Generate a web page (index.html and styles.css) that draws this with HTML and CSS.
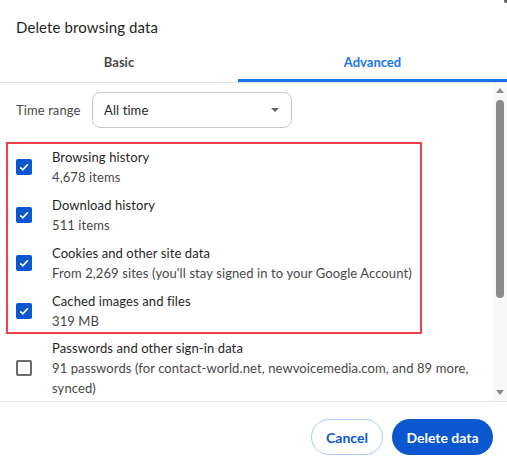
FILE: index.html
```html
<!DOCTYPE html>
<html>
<head>
<meta charset="utf-8">
<link rel="stylesheet" href="styles.css">
</head>
<body>
<div class="dialog">
  <div class="corner"></div>
  <div class="header">Delete browsing data</div>
  <div class="tabs">
    <div class="tab basic">Basic</div>
    <div class="tab active">Advanced</div>
  </div>
  <div class="scroll">
    <div class="content">
      <div class="range">
        <span class="range-label">Time range</span>
        <div class="select">
          <span>All time</span>
          <span class="caret"></span>
        </div>
      </div>
      <div class="highlight">
        <div class="row">
          <span class="cb checked"><svg viewBox="0 0 16 16" width="16" height="16"><path d="M4.2 8.3l2.6 2.5 5-5.4" fill="none" stroke="#fff" stroke-width="1.6"/></svg></span>
          <div class="txt"><div class="t">Browsing history</div><div class="s">4,678 items</div></div>
        </div>
        <div class="row">
          <span class="cb checked"><svg viewBox="0 0 16 16" width="16" height="16"><path d="M4.2 8.3l2.6 2.5 5-5.4" fill="none" stroke="#fff" stroke-width="1.6"/></svg></span>
          <div class="txt"><div class="t">Download history</div><div class="s">511 items</div></div>
        </div>
        <div class="row">
          <span class="cb checked"><svg viewBox="0 0 16 16" width="16" height="16"><path d="M4.2 8.3l2.6 2.5 5-5.4" fill="none" stroke="#fff" stroke-width="1.6"/></svg></span>
          <div class="txt"><div class="t">Cookies and other site data</div><div class="s">From 2,269 sites (you'll stay signed in to your Google Account)</div></div>
        </div>
        <div class="row">
          <span class="cb checked"><svg viewBox="0 0 16 16" width="16" height="16"><path d="M4.2 8.3l2.6 2.5 5-5.4" fill="none" stroke="#fff" stroke-width="1.6"/></svg></span>
          <div class="txt"><div class="t">Cached images and files</div><div class="s">319 MB</div></div>
        </div>
      </div>
      <div class="row plain">
        <span class="cb"></span>
        <div class="txt"><div class="t">Passwords and other sign-in data</div><div class="s">91 passwords (for contact-world.net, newvoicemedia.com, and 89 more, synced)</div></div>
      </div>
    </div>
    <div class="scrollbar">
      <span class="arrow up"></span>
      <span class="thumb"></span>
      <span class="arrow down"></span>
    </div>
  </div>
  <div class="footer">
    <button class="btn cancel">Cancel</button>
    <button class="btn primary">Delete data</button>
  </div>
</div>
</body>
</html>
```
FILE: styles.css
```css
* { box-sizing: border-box; }
html, body { margin: 0; padding: 0; background: #fff; }
body {
  font-family: Lato, "Noto Sans", sans-serif;
  color: #1f1f1f;
  width: 507px;
  height: 470px;
  overflow: hidden;
}
.dialog { position: relative; width: 507px; height: 470px; display: flex; flex-direction: column; }
.corner {
  position: absolute; top: 0; right: 0; width: 3px; height: 3px;
  background: #5f6368; border-bottom-left-radius: 2px;
}
.header {
  height: 44px;
  padding: 17px 0 0 16px;
  font-size: 15px;
  line-height: 20px;
  letter-spacing: 0.1px;
  color: #1f1f1f;
}
.tabs {
  display: flex;
  height: 39px;
  border-bottom: 1px solid #e3e3e3;
}
.tab {
  flex: 1;
  text-align: center;
  font-size: 13px;
  font-weight: 700;
  line-height: 20px;
  padding-top: 8px;
  color: #474747;
}
.tab.basic { flex: none; width: 238px; }
.tab.active { color: #1a73e8; box-shadow: inset 0 -3px 0 #1a73e8; }
.scroll {
  height: 319px;
  display: flex;
  border-bottom: 1px solid #e3e3e3;
}
.content { flex: 1; padding: 9px 0 0 0; }
.range { display: flex; align-items: center; padding-left: 16px; }
.range-label { font-size: 13px; color: #474747; line-height: 20px; width: 76px; flex: none; letter-spacing: 0.1px; }
.select {
  width: 200px;
  height: 36px;
  border: 1px solid #c7c7c7;
  border-radius: 8px;
  display: flex;
  align-items: center;
  justify-content: space-between;
  padding: 0 12px 0 11px;
  font-size: 13px;
  letter-spacing: 0.1px;
  color: #1f1f1f;
}
.caret {
  width: 0; height: 0;
  border-left: 4px solid transparent;
  border-right: 4px solid transparent;
  border-top: 4px solid #5f6368;
}
.highlight {
  margin: 14px 0 0 6px;
  width: 416px;
  border: 2px solid #ef4349;
  padding: 3px 8px 1px;
  display: flex;
  flex-direction: column;
  gap: 8px;
}
.row { display: flex; align-items: center; gap: 20px; }
.row.plain { padding: 4px 0 0 16px; }
.cb {
  width: 16px; height: 16px; flex: none;
  border: 2px solid #6b6b6b;
  border-radius: 2px;
  display: flex;
}
.cb.checked { background: #0b57d0; border: none; }
.txt { font-size: 13px; line-height: 20px; letter-spacing: 0.1px; }
.t { color: #1f1f1f; }
.s { color: #474747; }
.row.plain .txt { padding-right: 12px; }
.scrollbar {
  width: 14px;
  background: #f8f8f8;
  display: flex;
  flex-direction: column;
  align-items: center;
  padding-top: 5px;
}
.arrow { width: 0; height: 0; border-left: 4px solid transparent; border-right: 4px solid transparent; }
.arrow.up { border-bottom: 5px solid #8a8a8a; }
.arrow.down { border-top: 5px solid #8a8a8a; margin-top: auto; margin-bottom: 6px; }
.thumb {
  width: 8px; height: 198px;
  background: #8a8a8a;
  border-radius: 4px;
  margin-top: 7px;
}
.footer {
  display: flex;
  justify-content: flex-end;
  gap: 9px;
  padding: 17px 14px 0 0;
}
.btn {
  height: 36px;
  border-radius: 18px;
  font-family: Lato, "Noto Sans", sans-serif;
  font-size: 14px;
  font-weight: 700;
  padding: 0;
  white-space: nowrap;
}
.cancel { width: 72px; background: #fff; color: #0b57d0; border: 1px solid #a8c7fa; }
.primary { width: 101px; background: #0b57d0; color: #fff; border: none; }
```
